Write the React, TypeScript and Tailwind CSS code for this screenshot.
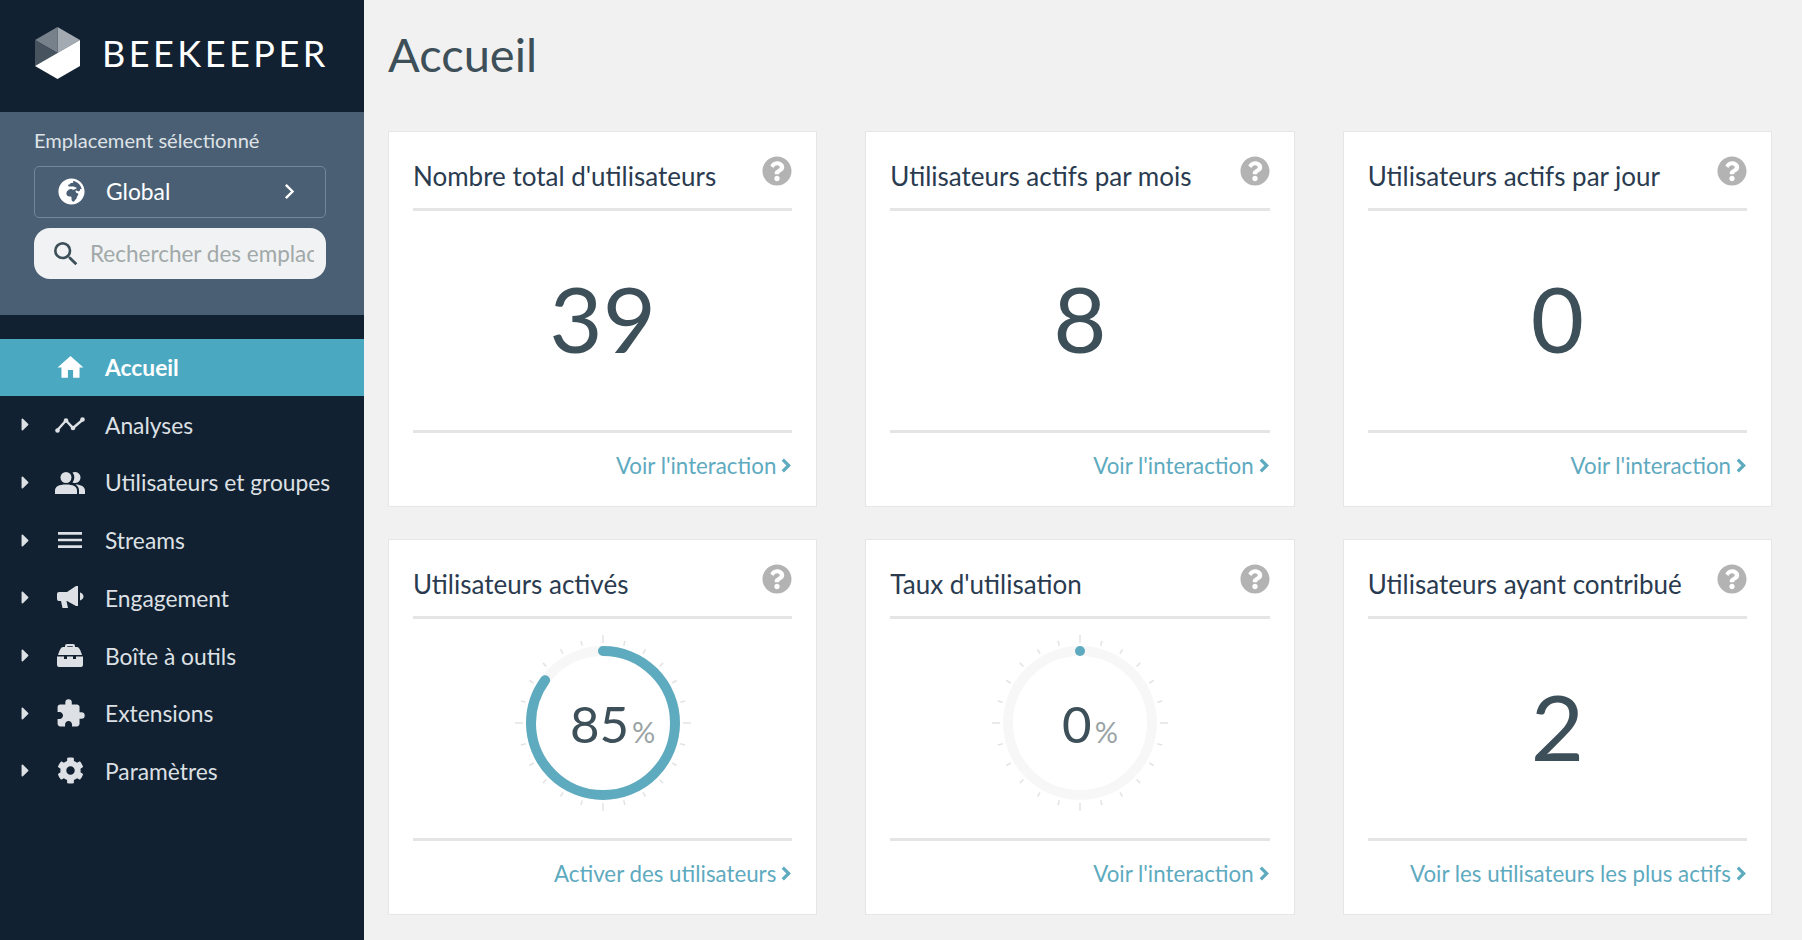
import type { ReactNode } from "react";
import { FaCaretRight, FaCog, FaGlobeAfrica, FaQuestionCircle } from "react-icons/fa";
import { MdExtension, MdHome, MdMenu, MdSearch } from "react-icons/md";

const Logo = () => (
  <svg width="46" height="52" viewBox="35 28 46 52">
    <polygon points="57.5,28 80,41 57.5,54" fill="#a3aab1" />
    <polygon points="57.5,28 35,41 57.5,54" fill="#77818b" />
    <polygon points="35,41 35,67 57.5,54" fill="#47535e" />
    <polygon points="35,67 80,41 80,67 57.5,80" fill="#ffffff" />
  </svg>
);

const ChartIcon = () => (
  <svg width="30" height="16" viewBox="0 0 30 16" fill="none" stroke="currentColor">
    <polyline points="2,13.5 11,3.5 18,11 28,2.5" strokeWidth="2.4" />
    <circle cx="2.5" cy="13.5" r="2.3" fill="currentColor" stroke="none" />
    <circle cx="11" cy="3.5" r="2.3" fill="currentColor" stroke="none" />
    <circle cx="18" cy="11" r="2.3" fill="currentColor" stroke="none" />
    <circle cx="27.5" cy="2.5" r="2.3" fill="currentColor" stroke="none" />
  </svg>
);

const UsersIcon = () => (
  <svg width="30" height="22" viewBox="0 0 30 22" fill="currentColor">
    <circle cx="11" cy="5.500" r="5.500" />
    <path d="M0 22v-3.500C0 14.500 4 12.500 11 12.500s11 2 11 6V22z" />
    <path d="M17.500 .6a5.500 5.500 0 1 1 0 9.800 7.500 7.500 0 0 0 0-9.800z" />
    <path d="M20.500 12.500c5.500 0 9.500 2.200 9.500 6V22h-6v-3.500c0-2.400-1-4.400-3.500-6z" />
  </svg>
);

const MegaphoneIcon = () => (
  <svg width="27" height="23" viewBox="0 0 27 23" fill="currentColor">
    <path d="M2 6h8l9-6h2v20h-2l-9-5H9.500l1.500 7H5.500L4 15H2a2 2 0 0 1-2-2V8a2 2 0 0 1 2-2z" />
    <path d="M23 6.500c2 .6 3.500 2.200 3.500 4s-1.500 3.400-3.500 4z" />
  </svg>
);

const ToolboxIcon = () => (
  <svg width="28" height="23" viewBox="0 0 28 23" fill="currentColor">
    <path d="M9 3.500V2a2 2 0 0 1 2-2h6a2 2 0 0 1 2 2v1.500h-2.200V2.200h-5.600v1.300z" />
    <path d="M7 3h14c2 0 3.500 3 5 8H2c1.500-5 3-8 5-8z" />
    <path d="M1 12.500h7V15h3v-2.500h6V15h3v-2.500h7V21a2 2 0 0 1-2 2H3a2 2 0 0 1-2-2z" />
  </svg>
);

const Chevron = ({ width = 10, height = 15, stroke = 3 }: { width?: number; height?: number; stroke?: number }) => (
  <svg width={width} height={height} viewBox="0 0 9 14" fill="none" stroke="currentColor" strokeWidth={stroke}>
    <polyline points="1.500,1.500 7,7 1.500,12.500" />
  </svg>
);

interface NavEntry {
  label: string;
  icon: ReactNode;
}

const navItems: NavEntry[] = [
  { label: "Analyses", icon: <ChartIcon /> },
  { label: "Utilisateurs et groupes", icon: <UsersIcon /> },
  { label: "Streams", icon: <MdMenu size={32} /> },
  { label: "Engagement", icon: <MegaphoneIcon /> },
  { label: "Boîte à outils", icon: <ToolboxIcon /> },
  { label: "Extensions", icon: <MdExtension size={31} /> },
  { label: "Paramètres", icon: <FaCog size={27} /> },
];

const Sidebar = () => (
  <aside className="w-[364px] h-[940px] shrink-0 bg-[#112131]">
    <div className="h-[112px] flex items-center pl-[35px] pb-[6px]">
      <Logo />
      <span className="ml-[21px] text-[36px] leading-none font-normal tracking-[3.500px] text-white">BEEKEEPER</span>
    </div>
    <div className="h-[203px] bg-[#4a5f73] pt-[15px] pl-[34px] pr-[38px]">
      <div className="h-[26px] text-[20.100px] leading-[26px] text-[#dfe3e7]">Emplacement sélectionné</div>
      <div className="mt-[13px] h-[52px] flex items-center pl-[23px] pr-[30px] pb-[1px] border border-[#73869a] rounded-[5px] text-white">
        <FaGlobeAfrica size={27} />
        <span className="ml-[21px] text-[22.800px] font-normal">Global</span>
        <span className="ml-auto flex"><Chevron width={11} height={17} stroke={2} /></span>
      </div>
      <div className="mt-[10px] h-[51px] flex items-center pl-[16px] rounded-[16px] bg-[#f0f2f4] overflow-hidden">
        <MdSearch size={32} className="text-[#3d4f58] shrink-0" />
        <input
          placeholder="Rechercher des emplacements"
          className="ml-[8px] w-[224px] text-[22.500px] bg-transparent outline-none placeholder:text-[#a1a9a8]"
        />
      </div>
    </div>
    <nav className="mt-[24px]">
      <div className="h-[57px] flex items-center bg-[#4ba8c1] text-white">
        <span className="w-[56px] flex justify-center ml-[42px]"><MdHome size={31} /></span>
        <span className="ml-[7px] text-[22.800px] font-bold">Accueil</span>
      </div>
      {navItems.map((item) => (
        <div key={item.label} className="h-[57.700px] flex items-center text-[#dde0e4]">
          <span className="w-[42px] flex justify-center pl-[8px]"><FaCaretRight size={21} /></span>
          <span className="w-[56px] flex justify-center">{item.icon}</span>
          <span className="ml-[7px] text-[22.800px]">{item.label}</span>
        </div>
      ))}
    </nav>
  </aside>
);

const Gauge = ({ value }: { value: number }) => {
  const radius = 72;
  const circumference = 2 * Math.PI * radius;
  const ticks = Array.from({ length: 24 }, (_, i) => i * 15);
  return (
    <div className="relative w-[180px] h-[180px] mb-[11px]">
      <svg width="180" height="180" viewBox="0 0 180 180">
        {ticks.map((deg) => (
          <line key={deg} x1="90" y1={deg % 90 === 0 ? 2 : 5} x2="90" y2="10" stroke="#e3e3e3" strokeWidth="1.5" transform={`rotate(${deg} 90 90)`} />
        ))}
        <circle cx="90" cy="90" r={radius} fill="none" stroke="#f7f7f7" strokeWidth="10" />
        {value > 0 ? (
          <circle
            cx="90"
            cy="90"
            r={radius}
            fill="none"
            stroke="#5eaabf"
            strokeWidth="10"
            strokeLinecap="round"
            strokeDasharray={`${(circumference * value) / 100} ${circumference}`}
            transform="rotate(-90 90 90)"
          />
        ) : (
          <circle cx="90" cy="18" r="5" fill="#5eaabf" />
        )}
      </svg>
      <div className="absolute inset-0 flex items-baseline justify-center pt-[65px] pl-[20px] leading-none">
        <span className="text-[51px] text-[#3d4f58] font-normal">{value}</span>
        <span className="ml-[3px] text-[29px] text-[#9aa3a5]">%</span>
      </div>
    </div>
  );
};

interface CardProps {
  title: string;
  link: string;
  children: ReactNode;
}

const Card = ({ title, link, children }: CardProps) => (
  <div className="relative h-[376px] bg-white border border-[#e6e6e6] px-[24px] flex flex-col">
    <FaQuestionCircle size={30} className="absolute right-[24px] top-[24px] text-[#b3b3b3]" />
    <div className="h-[79px] flex items-end pb-[15px] border-b-[3px] border-[#e5e5e5] text-[#2a3b50]">
      <span className="text-[26px] leading-[34px] whitespace-nowrap">{title}</span>
    </div>
    <div className="h-[219px] flex items-center justify-center">{children}</div>
    <div className="border-t-[3px] border-[#e5e5e5] flex-1 flex items-center justify-end gap-[5px] text-[#5eaabf] pb-[8px]">
      <span className="text-[22.300px]">{link}</span>
      <span className="flex mr-[1px]"><Chevron /></span>
    </div>
  </div>
);

const BigNumber = ({ value }: { value: string }) => (
  <span className="text-[92px] leading-none text-[#3d4f58] pb-[6px]">{value}</span>
);

export default function App() {
  return (
    <div className="flex h-[940px] w-[1802px] overflow-hidden bg-[#f1f1f1] font-['Lato','Liberation_Sans',sans-serif]">
      <Sidebar />
      <main className="flex-1 pl-[24px] pr-[30px]">
        <h1 className="h-[131px] pt-[23px] text-[47px] leading-[62px] font-normal text-[#3d4f58]">Accueil</h1>
        <div className="grid grid-cols-3 gap-x-[48px] gap-y-[32px]">
          <Card title="Nombre total d'utilisateurs" link="Voir l'interaction"><BigNumber value="39" /></Card>
          <Card title="Utilisateurs actifs par mois" link="Voir l'interaction"><BigNumber value="8" /></Card>
          <Card title="Utilisateurs actifs par jour" link="Voir l'interaction"><BigNumber value="0" /></Card>
          <Card title="Utilisateurs activés" link="Activer des utilisateurs"><Gauge value={85} /></Card>
          <Card title="Taux d'utilisation" link="Voir l'interaction"><Gauge value={0} /></Card>
          <Card title="Utilisateurs ayant contribué" link="Voir les utilisateurs les plus actifs"><BigNumber value="2" /></Card>
        </div>
      </main>
    </div>
  );
}
